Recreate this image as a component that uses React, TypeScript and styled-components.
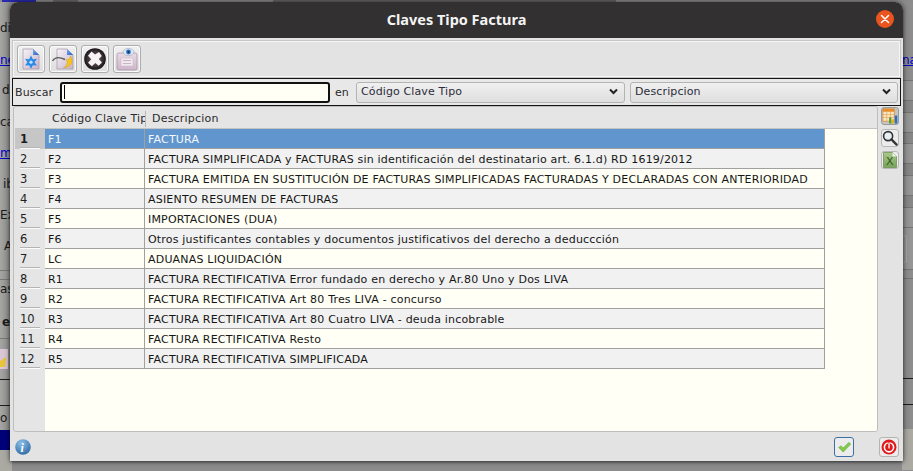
import React from "react";
import styled, { createGlobalStyle } from "styled-components";

const Global = createGlobalStyle`
  html, body { margin: 0; padding: 0; width: 913px; height: 471px; overflow: hidden; background: #8f8f8f; }
  * { box-sizing: border-box; }
`;

const Page = styled.div`
  position: relative;
  width: 913px;
  height: 471px;
  overflow: hidden;
  font-family: "DejaVu Sans", sans-serif;
  font-size: 11px;
  color: #1c1c1c;
  background: #8c8c8c;
`;

const Backdrop = styled.div`
  display: flex;
  flex-direction: column;
  height: 471px;
`;

const TopSpecks = styled.div`
  height: 2px;
  flex: none;
  display: flex;
`;

const Speck = styled.div<{ $w: number; $ml: number; $c: string }>`
  width: ${(p) => p.$w}px;
  margin-left: ${(p) => p.$ml}px;
  height: 2px;
  background: ${(p) => p.$c};
`;

const Sides = styled.div`
  flex: 1;
  display: flex;
  justify-content: space-between;
`;

const Strip = styled.div`
  width: 12px;
  display: flex;
  flex-direction: column;
  overflow: hidden;
  white-space: nowrap;
  background: linear-gradient(90deg, #a5a5a3, #8b8b8b);
`;

const RightStrip = styled(Strip)`
  width: 11px;
  background: #8d8d8d;
`;

const Frag = styled.div<{ $h: number; $pad?: number; $line?: string; $bg?: string; $bold?: boolean }>`
  height: ${(p) => p.$h}px;
  flex: none;
  display: flex;
  align-items: center;
  padding-left: ${(p) => p.$pad ?? 0}px;
  color: #1a1a1a;
  font-size: 12px;
  font-weight: ${(p) => (p.$bold ? 700 : 400)};
  background: ${(p) => p.$bg ?? "transparent"};
  border-bottom: 1px solid ${(p) => p.$line ?? "transparent"};
`;

const BackLink = styled.span`
  color: #0000c8;
  text-decoration: underline;
`;

const BackBox = styled.div`
  width: 5px;
  height: 28px;
  border: 1px solid #a8a8a8;
  border-left: none;
  border-radius: 0 3px 3px 0;
`;

const Dialog = styled.div`
  position: absolute;
  left: 10px;
  top: 2px;
  width: 893px;
  height: 459px;
  display: flex;
  flex-direction: column;
  background: #e3e3e3;
  border-radius: 8px 8px 0 0;
  box-shadow: 0 0 6px rgba(0, 0, 0, 0.55), 0 1px 3px rgba(0, 0, 0, 0.4);
`;

const TitleBar = styled.header`
  height: 36px;
  flex: none;
  display: flex;
  align-items: center;
  justify-content: space-between;
  padding: 0 9px 2px 0;
  background: #323030;
  border-radius: 8px 8px 0 0;
`;

const Title = styled.h1`
  flex: 1;
  margin: 0;
  padding-left: 27px;
  text-align: center;
  color: #f4f4f4;
  font-family: "Noto Sans", sans-serif;
  font-size: 14.5px;
  font-weight: 700;
`;

const CloseBtn = styled.div`
  width: 18px;
  height: 18px;
  border-radius: 50%;
  background: #e9541f;
  display: flex;
  align-items: center;
  justify-content: center;
`;

const Toolbar = styled.div`
  height: 38px;
  margin: 2px 2px 0 2px;
  flex: none;
  display: flex;
  align-items: center;
  gap: 4px;
  padding: 0 0 0 4px;
  border: 1px solid #c6c6c6;
  box-shadow: inset 0 0 0 1px #f6f6f6;
`;

const ToolBtn = styled.div`
  width: 28px;
  height: 28px;
  border: 1px solid #adadad;
  border-radius: 3px;
  background: linear-gradient(#f0f0f0, #dedede);
  box-shadow: inset 0 0 0 1px #fafafa;
  display: flex;
  align-items: center;
  justify-content: center;
`;

const SearchBar = styled.div`
  height: 28px;
  margin: 0 2px;
  flex: none;
  display: flex;
  align-items: center;
  padding: 0 3px 0 2px;
  border: 1px solid #141414;
  background: #e8e8e8;
  letter-spacing: 0.1px;
`;

const SearchLabel = styled.label<{ $w: number }>`
  width: ${(p) => p.$w}px;
  flex: none;
  color: #2a2a2a;
`;

const SearchInput = styled.input`
  width: 270px;
  height: 21px;
  flex: none;
  margin-right: 5px;
  padding: 0 2px;
  border: 2px solid #111;
  border-radius: 3px;
  background: linear-gradient(#000, #000) 2px center / 1px 14px no-repeat, #fffff5;
  outline: none;
  font: inherit;
`;

const Select = styled.div<{ $w: number; $gap?: number }>`
  width: ${(p) => p.$w}px;
  height: 21px;
  flex: none;
  margin-right: ${(p) => p.$gap ?? 0}px;
  display: flex;
  align-items: center;
  justify-content: space-between;
  padding: 0 6px 1px 4px;
  border: 1px solid #b4b4b4;
  border-radius: 3px;
  background: linear-gradient(#f0f0f0, #dfdfdf);
  color: #2c2c3a;
  letter-spacing: 0.12px;
`;

const Middle = styled.div`
  flex: 1;
  min-height: 0;
  display: flex;
  gap: 3px;
  padding: 0 5px 0 3px;
`;

const GridPanel = styled.div`
  width: 865px;
  height: 326px;
  flex: none;
  display: grid;
  grid-template-columns: 30px 1fr;
  grid-template-rows: 22px 1fr;
  overflow: hidden;
  padding-left: 1px;
  border: 1px solid #bdbdbd;
  border-radius: 3px;
  background: #e5e5e5;
`;

const HeadRow = styled.div`
  grid-column: 1 / 3;
  display: grid;
  grid-template-columns: 30px 101px 680px;
  align-items: center;
  padding-top: 2px;
  border-bottom: 1px solid #c4c4c4;
  color: #2a2a2a;
  letter-spacing: 0.2px;
`;

const HeadCell = styled.div<{ $pad: number; $sep?: boolean }>`
  height: 16px;
  line-height: 16px;
  padding-left: ${(p) => p.$pad}px;
  overflow: hidden;
  white-space: nowrap;
  border-right: ${(p) => (p.$sep ? "1px solid #b8b8b8" : "none")};
`;

const RowNums = styled.div`
  display: flex;
  flex-direction: column;
  background: #e5e5e5;
`;

const RowNum = styled.div<{ $active?: boolean }>`
  height: 20px;
  flex: none;
  display: flex;
  align-items: center;
  padding-left: 5px;
  position: relative;
  font-size: 11.5px;
  font-weight: ${(p) => (p.$active ? 700 : 400)};
  background: ${(p) => (p.$active ? "#c6c6c6" : "transparent")};
  color: #1e1e1e;
  &::after {
    content: "";
    position: absolute;
    left: 5px;
    right: 5px;
    bottom: 0;
    height: 2px;
    background: linear-gradient(#b4b4b4 50%, #fbfbfb 50%);
    display: block;
  }
`;

const GridBody = styled.div`
  background: #fffff5;
`;

const Table = styled.div`
  width: 780px;
  border-right: 1px solid #a0a0a0;
  border-bottom: 1px solid #a0a0a0;
`;

const Row = styled.div<{ $selected?: boolean; $odd?: boolean }>`
  height: 20px;
  display: grid;
  grid-template-columns: 100px 1fr;
  color: ${(p) => (p.$selected ? "#f4f8fc" : "#161616")};
  background: ${(p) => (p.$selected ? "#6096cd" : p.$odd ? "#f1f1f1" : "#fffff5")};
  border-bottom: 1px solid #a0a0a0;
  &:last-child { border-bottom: none; height: 19px; }
`;

const Cell = styled.div<{ $sep?: boolean }>`
  display: flex;
  align-items: center;
  padding: 1px 0 0 3px;
  white-space: nowrap;
  letter-spacing: 0.19px;
  border-right: ${(p) => (p.$sep ? "1px solid #a0a0a0" : "none")};
`;

const SideTools = styled.div`
  width: 18px;
  flex: none;
  display: flex;
  flex-direction: column;
  gap: 4px;
  margin-top: 1px;
`;

const SideBtn = styled.div<{ $active?: boolean }>`
  width: 18px;
  height: 18px;
  border: 1px solid ${(p) => (p.$active ? "#9b9b9b" : "#b8b8b8")};
  border-radius: 3px;
  background: ${(p) => (p.$active ? "#c4c4c4" : "#ececec")};
  display: flex;
  align-items: center;
  justify-content: center;
`;

const Footer = styled.footer`
  height: 29px;
  flex: none;
  display: flex;
  align-items: center;
  padding: 0 4px 0 5px;
`;

const FootSpacer = styled.div`
  flex: 1;
`;

const OkBtn = styled.div`
  width: 20px;
  height: 20px;
  margin-right: 25px;
  border: 1px solid #3d6fa6;
  border-radius: 3px;
  background: #ececec;
  display: flex;
  align-items: center;
  justify-content: center;
`;

const StopBtn = styled(OkBtn)`
  margin-right: 0;
  border-color: #b4b4b4;
`;

const Chevron = () => (
  <svg width="9" height="7" viewBox="0 0 9 7">
    <path d="M1 1.5 L4.5 5 L8 1.5" fill="none" stroke="#222" strokeWidth="2" />
  </svg>
);

const Gradients = () => (
  <svg width="0" height="0" style={{ position: "absolute" }}>
    <defs>
      <linearGradient id="pg" x1="0" y1="0" x2="1" y2="1">
        <stop offset="0" stopColor="#f6f3f8" />
        <stop offset="1" stopColor="#c9b4cb" />
      </linearGradient>
      <linearGradient id="fold" x1="0" y1="0" x2="1" y2="1">
        <stop offset="0" stopColor="#7fb0ee" />
        <stop offset="1" stopColor="#1f5fc4" />
      </linearGradient>
      <radialGradient id="blk" cx="0.5" cy="0.5" r="0.52">
        <stop offset="0" stopColor="#6e6268" />
        <stop offset="0.7" stopColor="#3a3036" />
        <stop offset="1" stopColor="#100c0f" />
      </radialGradient>
      <linearGradient id="clip" x1="0" y1="0" x2="0" y2="1">
        <stop offset="0" stopColor="#eadce6" />
        <stop offset="1" stopColor="#cdb6c8" />
      </linearGradient>
      <radialGradient id="inf" cx="0.4" cy="0.25" r="0.9">
        <stop offset="0" stopColor="#8fc0e8" />
        <stop offset="1" stopColor="#205f9c" />
      </radialGradient>
      <linearGradient id="xl" x1="0" y1="0" x2="0" y2="1">
        <stop offset="0" stopColor="#a9c88a" />
        <stop offset="1" stopColor="#77a259" />
      </linearGradient>
    </defs>
  </svg>
);

const NewIcon = () => (
  <svg width="24" height="24" viewBox="0 0 24 24">
    <path d="M4 2 H14 L20 8 V22 H4 Z" fill="url(#pg)" stroke="#a493a8" strokeWidth="0.7" />
    <path d="M14 2 L20 8 H14 Z" fill="url(#fold)" />
    <path d="M12 8.5 L13.9 12.2 L18 11.8 L15.6 15.2 L18 18.6 L13.9 18.2 L12 21.8 L10.1 18.2 L6 18.6 L8.4 15.2 L6 11.8 L10.1 12.2 Z" fill="#2b8ae6" />
    <circle cx="12" cy="15.2" r="1.6" fill="#bfe2ff" />
  </svg>
);

const EditIcon = () => (
  <svg width="24" height="24" viewBox="0 0 24 24">
    <path d="M6 2 H16 L22 8 V22 H6 Z" fill="url(#pg)" stroke="#a493a8" strokeWidth="0.7" />
    <path d="M16 2 L22 8 H16 Z" fill="url(#fold)" />
    <path d="M1.5 14 C4 10 9 10 14 12.5" fill="none" stroke="#5c5c5c" strokeWidth="1.4" />
    <path d="M19.5 9 C23 13.5 20.5 21 12.5 20.5 C16.5 19 17.5 16 15 12.5 C17 13.5 19 12 19.5 9 Z" fill="#f6c51c" stroke="#d0960c" strokeWidth="0.4" />
  </svg>
);

const DeleteIcon = () => (
  <svg width="24" height="24" viewBox="0 0 24 24">
    <circle cx="12" cy="12" r="10.8" fill="url(#blk)" />
    <path d="M8.5 4.5 L12 7.5 L16 5 L18.8 9 L15.8 12 L19 15.6 L15.6 18.8 L12.4 16 L8.8 19.2 L5 15.8 L8.2 12.2 L5 8.8 Z" fill="#f6f2f4" />
  </svg>
);

const ViewIcon = () => (
  <svg width="24" height="26" viewBox="0 0 24 26">
    <rect x="2" y="7" width="20" height="17" rx="2" fill="url(#clip)" stroke="#a890a6" strokeWidth="0.7" />
    <rect x="6" y="12" width="12" height="8" fill="#f1e7ee" stroke="#c4b0c0" strokeWidth="0.4" />
    <path d="M8 14.5 H16 M8 17.5 H16" stroke="#bda9b9" strokeWidth="0.8" />
    <ellipse cx="13.5" cy="6" rx="5.5" ry="3.6" fill="#dfe8f2" stroke="#8a9bb0" strokeWidth="0.5" />
    <circle cx="13.5" cy="6" r="2.4" fill="#2a6fc2" />
    <circle cx="13.5" cy="6" r="0.9" fill="#0f2d58" />
  </svg>
);

const ChartIcon = () => (
  <svg width="16" height="16" viewBox="0 0 17 17">
    <rect x="1" y="1" width="12" height="13" fill="#fbe7c4" stroke="#d98a2b" strokeWidth="0.8" />
    <rect x="1" y="1" width="12" height="3" fill="#e88d2a" />
    <path d="M1 7 H13 M1 10 H13 M5 4 V14 M9 4 V14" stroke="#e0a050" strokeWidth="0.7" />
    <rect x="7.5" y="10" width="2.5" height="6.5" fill="#5aa02c" />
    <rect x="10.5" y="12" width="2.5" height="4.5" fill="#e6b31e" />
    <rect x="13.5" y="8" width="2.8" height="8.5" fill="#2a6fc2" />
  </svg>
);

const SearchIcon = () => (
  <svg width="16" height="16" viewBox="0 0 17 17">
    <circle cx="6.5" cy="6.5" r="4.8" fill="#e8eef2" stroke="#333" strokeWidth="1.7" />
    <path d="M10 10 L15.5 15.5" stroke="#333" strokeWidth="2.4" strokeLinecap="round" />
  </svg>
);

const ExcelIcon = () => (
  <svg width="14" height="16" viewBox="0 0 14 16">
    <path d="M0.5 0.5 H9.5 L13.5 4.5 V15.5 H0.5 Z" fill="url(#xl)" stroke="#668a4c" strokeWidth="0.7" />
    <path d="M9.5 0.5 L13.5 4.5 H9.5 Z" fill="#eef4e6" />
    <text x="3" y="13" fontFamily="DejaVu Sans" fontSize="11" fill="#2c5a20">X</text>
  </svg>
);

const InfoIcon = () => (
  <svg width="16" height="16" viewBox="0 0 16 16">
    <circle cx="8" cy="8" r="7.8" fill="url(#inf)" />
    <text x="5.6" y="13" fontFamily="Liberation Serif" fontStyle="italic" fontWeight="700" fontSize="12" fill="#fff">i</text>
  </svg>
);

const CheckIcon = () => (
  <svg width="15" height="12" viewBox="0 0 16 14">
    <path d="M1 7.5 L4 5.5 L6.5 8 L13 1.5 L15.5 3.5 L6.5 13 Z" fill="#83c94e" stroke="#6aa83c" strokeWidth="0.5" />
  </svg>
);

const StopIcon = () => (
  <svg width="16" height="16" viewBox="0 0 16 16">
    <circle cx="8" cy="8" r="7.5" fill="#e01a1a" />
    <circle cx="8" cy="8.3" r="4.6" fill="none" stroke="#fff" strokeWidth="1.6" />
    <rect x="6.8" y="3" width="2.4" height="7" fill="#e01a1a" />
    <rect x="7.4" y="3.5" width="1.3" height="6" fill="#fff" />
  </svg>
);

const BackDoc = () => (
  <svg width="10" height="20" viewBox="0 0 10 20">
    <rect x="-6" y="0" width="14" height="20" fill="#d9c8d6" />
    <path d="M0 12 L6 8 L5 18 H0 Z" fill="#e8c53a" />
  </svg>
);

const rows: [string, string][] = [
  ["F1", "FACTURA"],
  ["F2", "FACTURA SIMPLIFICADA y FACTURAS sin identificación del destinatario art. 6.1.d) RD 1619/2012"],
  ["F3", "FACTURA EMITIDA EN SUSTITUCIÓN DE FACTURAS SIMPLIFICADAS FACTURADAS Y DECLARADAS CON ANTERIORIDAD"],
  ["F4", "ASIENTO RESUMEN DE FACTURAS"],
  ["F5", "IMPORTACIONES (DUA)"],
  ["F6", "Otros justificantes contables y documentos justificativos del derecho a deduccción"],
  ["LC", "ADUANAS LIQUIDACIÓN"],
  ["R1", "FACTURA RECTIFICATIVA Error fundado en derecho y Ar.80 Uno y Dos LIVA"],
  ["R2", "FACTURA RECTIFICATIVA Art 80 Tres LIVA - concurso"],
  ["R3", "FACTURA RECTIFICATIVA Art 80 Cuatro LIVA - deuda incobrable"],
  ["R4", "FACTURA RECTIFICATIVA Resto"],
  ["R5", "FACTURA RECTIFICATIVA SIMPLIFICADA"],
];

const rightBands = [20, 12, 20, 11, 20, 12, 20, 12, 20];

export default function App() {
  return (
    <Page>
      <Global />
      <Gradients />
      <Backdrop>
        <TopSpecks>
          <Speck $w={34} $ml={2} $c="#2a2ab0" />
          <Speck $w={25} $ml={17} $c="#6a6a6a" />
          <Speck $w={343} $ml={195} $c="#666" />
        </TopSpecks>
        <Sides>
          <Strip>
            <Frag $h={12} />
            <Frag $h={28}>dic</Frag>
            <Frag $h={36}><BackLink>ne</BackLink></Frag>
            <Frag $h={24} $pad={2}>d</Frag>
            <Frag $h={40}>ca</Frag>
            <Frag $h={22}><BackLink>mu</BackLink></Frag>
            <Frag $h={40} $pad={3}>ib</Frag>
            <Frag $h={22}>Ex</Frag>
            <Frag $h={40} $pad={4}>A</Frag>
            <Frag $h={5} $line="#777" />
            <Frag $h={9} $line="#777" />
            <Frag $h={18}>as</Frag>
            <Frag $h={15} />
            <Frag $h={18} $pad={2} $bold>e</Frag>
            <Frag $h={8} $line="#777" />
            <Frag $h={41} $line="#1c1c1c"><BackDoc /></Frag>
            <Frag $h={26} $line="#1c1c1c" />
            <Frag $h={24}>o</Frag>
            <Frag $h={20} $bg="#00007a" />
            <Frag $h={21} $bg="#aaa9a2" />
          </Strip>
          <RightStrip>
            <Frag $h={50} />
            <Frag $h={17}><BackLink>na</BackLink></Frag>
            <Frag $h={12} $line="#747474" />
            {rightBands.map((h, i) => (
              <Frag key={i} $h={h} $line="#747474" $bg={i % 2 === 0 ? "#969696" : "#878787"} />
            ))}
            <Frag $h={42} $line="#747474" $bg="#969696"><BackBox /></Frag>
            <Frag $h={9} $line="#747474" />
            <Frag $h={100} $line="#1c1c1c" />
            <Frag $h={26} $line="#1c1c1c" />
            <Frag $h={24} />
            <Frag $h={41} $bg="#aaa9a2" />
          </RightStrip>
        </Sides>
      </Backdrop>
      <Dialog>
        <TitleBar>
          <Title>Claves Tipo Factura</Title>
          <CloseBtn>
            <svg width="10" height="10" viewBox="0 0 10 10">
              <path d="M1.5 1.5 L8.5 8.5 M8.5 1.5 L1.5 8.5" stroke="#fff" strokeWidth="1.5" strokeLinecap="round" />
            </svg>
          </CloseBtn>
        </TitleBar>
        <Toolbar>
          <ToolBtn><NewIcon /></ToolBtn>
          <ToolBtn><EditIcon /></ToolBtn>
          <ToolBtn><DeleteIcon /></ToolBtn>
          <ToolBtn><ViewIcon /></ToolBtn>
        </Toolbar>
        <SearchBar>
          <SearchLabel $w={45}>Buscar</SearchLabel>
          <SearchInput />
          <SearchLabel $w={21}>en</SearchLabel>
          <Select $w={269} $gap={5}>Código Clave Tipo<Chevron /></Select>
          <Select $w={268}>Descripcion<Chevron /></Select>
        </SearchBar>
        <Middle>
          <GridPanel>
            <HeadRow>
              <span />
              <HeadCell $pad={7} $sep>Código Clave Tipo</HeadCell>
              <HeadCell $pad={6}>Descripcion</HeadCell>
            </HeadRow>
            <RowNums>
              {rows.map((_, i) => (
                <RowNum key={i} $active={i === 0}>{i + 1}</RowNum>
              ))}
            </RowNums>
            <GridBody>
              <Table>
                {rows.map(([code, desc], i) => (
                  <Row key={code} $selected={i === 0} $odd={i % 2 === 1}>
                    <Cell $sep>{code}</Cell>
                    <Cell>{desc}</Cell>
                  </Row>
                ))}
              </Table>
            </GridBody>
          </GridPanel>
          <SideTools>
            <SideBtn $active><ChartIcon /></SideBtn>
            <SideBtn><SearchIcon /></SideBtn>
            <SideBtn><ExcelIcon /></SideBtn>
          </SideTools>
        </Middle>
        <Footer>
          <InfoIcon />
          <FootSpacer />
          <OkBtn><CheckIcon /></OkBtn>
          <StopBtn><StopIcon /></StopBtn>
        </Footer>
      </Dialog>
    </Page>
  );
}
